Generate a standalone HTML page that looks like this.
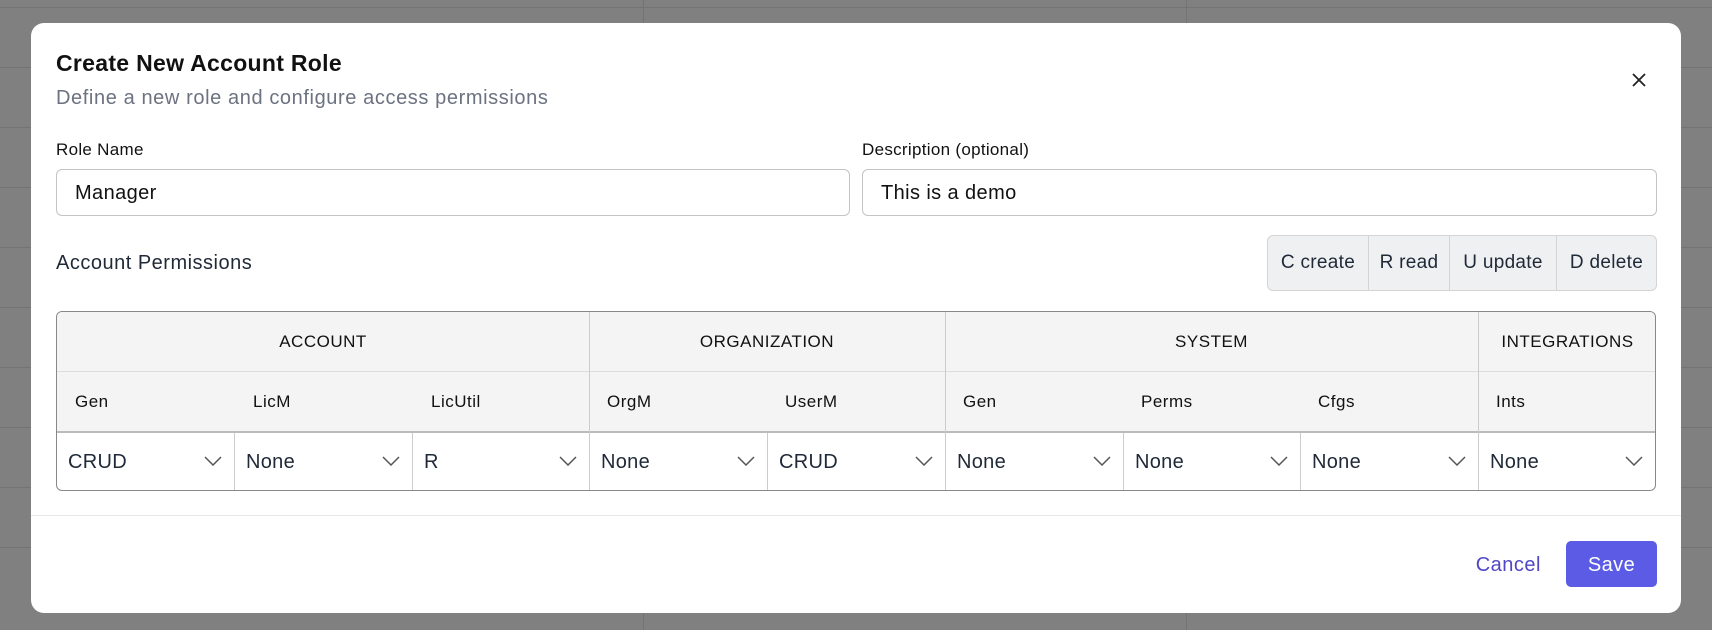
<!DOCTYPE html>
<html><head><meta charset="utf-8"><style>
*{box-sizing:border-box;margin:0;padding:0}
body{width:1712px;height:630px;overflow:hidden;background:#808080;font-family:"Liberation Sans",sans-serif;position:relative;color:#111827}
.hl{position:absolute;left:0;width:1712px;height:1px;background:#747474}
.vl{position:absolute;top:0;height:630px;width:1px;background:#747474}
.modal{position:absolute;left:31px;top:23px;width:1650px;height:590px;background:#fff;border-radius:13px}
.abs{position:absolute}
.title{left:25px;top:27px;font-size:23px;font-weight:bold;color:#111;letter-spacing:.3px}
.sub{left:25px;top:64px;font-size:20px;color:#6b7280;letter-spacing:.6px}
.lbl{font-size:17px;color:#111;letter-spacing:.3px}
.inp{border:1px solid #c4c4c4;border-radius:6px;height:47px;font-size:20px;padding:12px 18px;color:#111;letter-spacing:.4px}
.legend{left:1236px;top:212px;width:390px;height:56px;border:1px solid #d4d4d4;border-radius:6px;background:#eef0f2;display:flex;font-size:19px;color:#1f2937;letter-spacing:.3px}
.legend div{display:flex;align-items:center;justify-content:center;border-right:1px solid #d4d4d4}
.legend div:last-child{border-right:none}
.tbl{left:25px;top:288px;width:1600px;height:180px;border:1.5px solid #888;border-radius:6px;overflow:hidden}
.cell{position:absolute;font-size:17px;color:#111;display:flex;align-items:center;letter-spacing:.5px}
.sel{font-size:20px;color:#1f2937;letter-spacing:.3px}
.chev{position:absolute;right:12px;top:23px}
</style></head><body>
<div class="hl" style="top:7px"></div><div class="hl" style="top:67px"></div><div class="hl" style="top:127px"></div><div class="hl" style="top:187px"></div><div class="hl" style="top:247px"></div><div class="hl" style="top:307px"></div><div class="hl" style="top:367px"></div><div class="hl" style="top:427px"></div><div class="hl" style="top:487px"></div><div class="hl" style="top:547px"></div>
<div class="vl" style="left:643px"></div><div class="vl" style="left:1186px"></div>
<div class="modal">
<div class="abs title">Create New Account Role</div>
<div class="abs sub">Define a new role and configure access permissions</div>
<svg class="abs" style="left:1601px;top:50px" width="14" height="14" viewBox="0 0 14 14"><path d="M1 1L13 13M13 1L1 13" stroke="#222" stroke-width="1.8"/></svg>
<div class="abs lbl" style="left:25px;top:117px">Role Name</div>
<div class="abs lbl" style="left:831px;top:117px">Description (optional)</div>
<div class="abs inp" style="left:25px;top:146px;width:794px">Manager</div>
<div class="abs inp" style="left:831px;top:146px;width:795px">This is a demo</div>
<div class="abs" style="left:25px;top:229px;font-size:20px;color:#1f2937;letter-spacing:.5px">Account Permissions</div>
<div class="abs legend"><div style="width:101px">C create</div><div style="width:81px">R read</div><div style="width:107px">U update</div><div style="flex:1">D delete</div></div>
<div class="abs tbl">
<div class="abs" style="left:0;top:0;width:1600px;height:120px;background:#f4f4f4"></div>
<div class="abs" style="left:0;top:59px;width:1600px;height:1px;background:#dcdcdc"></div>
<div class="abs" style="left:0;top:119px;width:1600px;height:1.5px;background:#bbb"></div>
<div class="cell" style="left:0;top:0;width:532px;height:59px;justify-content:center">ACCOUNT</div>
<div class="cell" style="left:532px;top:0;width:356px;height:59px;justify-content:center">ORGANIZATION</div>
<div class="cell" style="left:888px;top:0;width:533px;height:59px;justify-content:center">SYSTEM</div>
<div class="cell" style="left:1421px;top:0;width:179px;height:59px;justify-content:center">INTEGRATIONS</div>
<div class="abs" style="left:532px;top:0;width:1px;height:180px;background:#ccc"></div>
<div class="abs" style="left:888px;top:0;width:1px;height:180px;background:#ccc"></div>
<div class="abs" style="left:1421px;top:0;width:1px;height:180px;background:#ccc"></div>
<div class="cell" style="left:18px;top:60px;height:60px">Gen</div>
<div class="cell" style="left:196px;top:60px;height:60px">LicM</div>
<div class="cell" style="left:374px;top:60px;height:60px">LicUtil</div>
<div class="cell" style="left:550px;top:60px;height:60px">OrgM</div>
<div class="cell" style="left:728px;top:60px;height:60px">UserM</div>
<div class="cell" style="left:906px;top:60px;height:60px">Gen</div>
<div class="cell" style="left:1084px;top:60px;height:60px">Perms</div>
<div class="cell" style="left:1261px;top:60px;height:60px">Cfgs</div>
<div class="cell" style="left:1439px;top:60px;height:60px">Ints</div>
<div class="cell sel" style="left:0;top:121px;width:178px;height:59px;padding-left:11px;border-right:1px solid #ccc">CRUD<svg class="chev" width="18" height="10"><path d="M1 1L9 9L17 1" fill="none" stroke="#555" stroke-width="1.5"/></svg></div>
<div class="cell sel" style="left:178px;top:121px;width:178px;height:59px;padding-left:11px;border-right:1px solid #ccc">None<svg class="chev" width="18" height="10"><path d="M1 1L9 9L17 1" fill="none" stroke="#555" stroke-width="1.5"/></svg></div>
<div class="cell sel" style="left:356px;top:121px;width:176px;height:59px;padding-left:11px">R<svg class="chev" width="18" height="10"><path d="M1 1L9 9L17 1" fill="none" stroke="#555" stroke-width="1.5"/></svg></div>
<div class="cell sel" style="left:533px;top:121px;width:178px;height:59px;padding-left:11px;border-right:1px solid #ccc">None<svg class="chev" width="18" height="10"><path d="M1 1L9 9L17 1" fill="none" stroke="#555" stroke-width="1.5"/></svg></div>
<div class="cell sel" style="left:711px;top:121px;width:177px;height:59px;padding-left:11px">CRUD<svg class="chev" width="18" height="10"><path d="M1 1L9 9L17 1" fill="none" stroke="#555" stroke-width="1.5"/></svg></div>
<div class="cell sel" style="left:889px;top:121px;width:178px;height:59px;padding-left:11px;border-right:1px solid #ccc">None<svg class="chev" width="18" height="10"><path d="M1 1L9 9L17 1" fill="none" stroke="#555" stroke-width="1.5"/></svg></div>
<div class="cell sel" style="left:1067px;top:121px;width:177px;height:59px;padding-left:11px;border-right:1px solid #ccc">None<svg class="chev" width="18" height="10"><path d="M1 1L9 9L17 1" fill="none" stroke="#555" stroke-width="1.5"/></svg></div>
<div class="cell sel" style="left:1244px;top:121px;width:177px;height:59px;padding-left:11px">None<svg class="chev" width="18" height="10"><path d="M1 1L9 9L17 1" fill="none" stroke="#555" stroke-width="1.5"/></svg></div>
<div class="cell sel" style="left:1422px;top:121px;width:176px;height:59px;padding-left:11px">None<svg class="chev" width="18" height="10"><path d="M1 1L9 9L17 1" fill="none" stroke="#555" stroke-width="1.5"/></svg></div>
</div>
<div class="abs" style="left:0;top:492px;width:1650px;height:1px;background:#e5e7eb"></div>
<div class="abs" style="left:1400px;width:110px;text-align:right;top:518px;height:46px;line-height:48px;font-size:20px;color:#4f46c8;letter-spacing:.5px">Cancel</div>
<div class="abs" style="left:1535px;top:518px;width:91px;height:46px;line-height:48px;text-align:center;background:#5b5be6;color:#fff;border-radius:5px;font-size:20px;letter-spacing:.4px">Save</div>
</div>
</body></html>
